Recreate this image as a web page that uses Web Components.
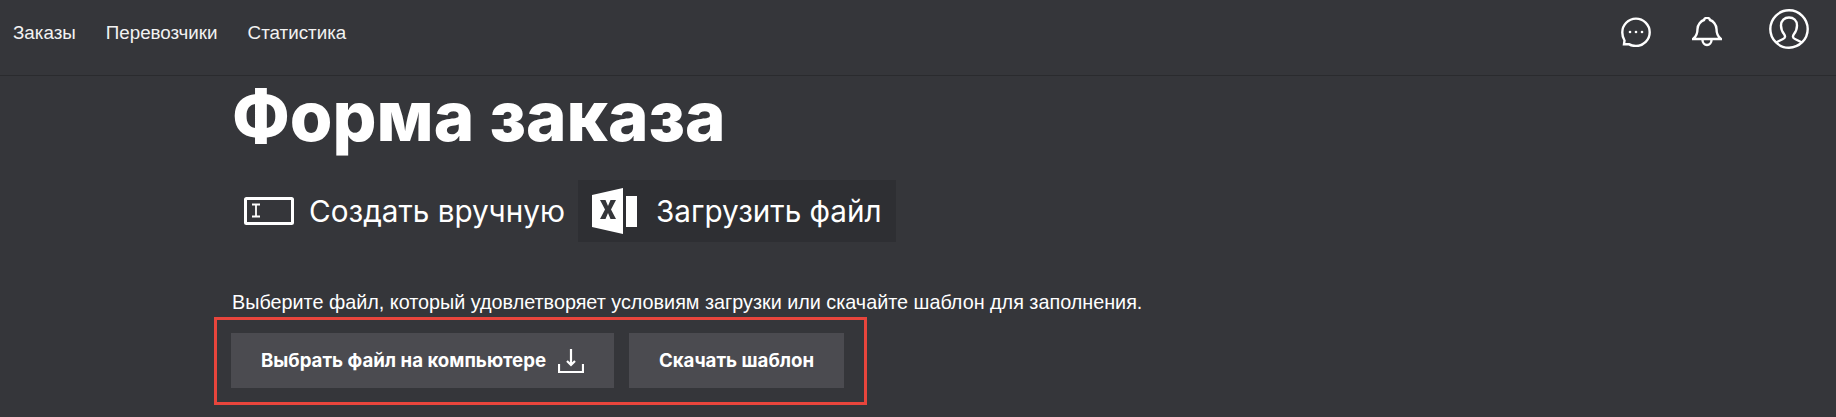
<!DOCTYPE html>
<html lang="ru">
<head>
<meta charset="utf-8">
<title>Форма заказа</title>
<style>
    html, body {
        margin: 0;
        height: 417px;
        overflow: hidden;
        background-color: #35363a;
        color: #fff;
        font-family: Inter, "Liberation Sans", sans-serif;
    }
</style>
</head>
<body>
<app-header></app-header>
<order-form></order-form>

<template id="appHeader">
<style>
    :host {
        display: flex;
        justify-content: space-between;
        height: 75px;
        border-bottom: 1px solid #2a2b2e;
    }
    nav {
        display: flex;
        gap: 30px;
        padding: 23px 0 0 13px;
        font-size: 18.8px;
        line-height: 20px;
        font-family: "Liberation Sans", sans-serif;
        color: #f2f2f2;
    }
    #icons {
        display: flex;
        align-items: flex-start;
    }
    svg {
        display: block;
        fill: none;
        stroke: #fff;
        stroke-width: 2.4;
    }
    #chat { margin: 17px 0 0 0; }
    #bell { margin: 17px 0 0 41px; }
    #user { margin: 9px 27px 0 47px; }
</style>
<nav>
    <span>Заказы</span>
    <span>Перевозчики</span>
    <span>Статистика</span>
</nav>
<div id="icons">
    <svg id="chat" width="30" height="30" viewBox="0 0 30 30">
        <path d="M3.500 23.500 C2 21 1.300 18.200 1.300 15.500 A13.700 13.700 0 1 1 15 29 C12.500 29 9.800 28.300 7.800 27.100 L3 27.300 Z" />
        <circle cx="9" cy="15" r="1.300" fill="#fff" stroke="none" />
        <circle cx="15" cy="15" r="1.300" fill="#fff" stroke="none" />
        <circle cx="21" cy="15" r="1.300" fill="#fff" stroke="none" />
    </svg>
    <svg id="bell" width="30" height="30" viewBox="0 0 30 30">
        <path d="M1 22 H29 C25.500 19.500 24.500 17 24.500 12 C24.500 7.500 21 4 18 3 C17.500 0.200 12.500 0.200 12 3 C9 4 5.500 7.500 5.500 12 C5.500 17 4.500 19.500 1 22 Z" />
        <path d="M10.500 23 A4.500 5 0 0 0 19.500 23" />
    </svg>
    <svg id="user" width="40" height="40" viewBox="0 0 40 40">
        <circle cx="20" cy="20" r="18.700" />
        <path d="M7 33.500 L14 30 C16.500 29 16.500 27 15 25 C13 22.500 12 19.500 12 16.500 C12 11.500 15.500 8.500 20 8.500 C24.500 8.500 28 11.500 28 16.500 C28 19.500 27 22.500 25 25 C23.500 27 23.500 29 26 30 L33 33.500" />
    </svg>
</div>
</template>

<template id="orderForm">
<style>
    :host {
        display: block;
        padding-left: 232px;
    }
    h1 {
        margin: 0;
        font-size: 69px;
        line-height: 80px;
        font-weight: 800;
        color: #fff;
    }
    #tabs {
        display: flex;
        margin: 24px 0 0 -2px;
    }
    p {
        margin: 50px 0 0 0;
        font-size: 19.8px;
        line-height: 20px;
        font-family: "Liberation Sans", sans-serif;
        color: #fff;
    }
    #actions {
        display: inline-flex;
        gap: 15px;
        margin: 5px 0 0 -18px;
        padding: 13px 20px 14px 14px;
        border: 3px solid #e8453c;
    }
</style>
<h1>Форма заказа</h1>
<div id="tabs">
    <form-tab>
        <svg slot="icon" width="50" height="28" viewBox="0 0 50 28" style="margin-right:15px">
            <rect x="1.500" y="1.500" width="47" height="25" rx="1" fill="none" stroke="#fff" stroke-width="3" />
            <path d="M8 7.500 H16 M12 7.500 V19.500 M8 19.500 H16" fill="none" stroke="#fff" stroke-width="1.800" />
        </svg>
        Создать вручную
    </form-tab>
    <form-tab active style="margin-left:-1px">
        <svg slot="icon" width="46" height="46" viewBox="0 0 46 46" style="margin-right:18px">
            <path d="M0 7 L31 0 V46 L0 39 Z" fill="#fff" />
            <rect x="34" y="8" width="11" height="31" fill="#fff" />
            <path d="M8 12 H13.500 L16 18 L18.500 12 H24 L19 21.500 L24 31 H18.500 L16 25 L13.500 31 H8 L13 21.500 Z" fill="#35363a" />
        </svg>
        Загрузить файл
    </form-tab>
</div>
<p>Выберите файл, который удовлетворяет условиям загрузки или скачайте шаблон для заполнения.</p>
<div id="actions">
    <action-button style="width:383px">
        Выбрать файл на компьютере
        <svg slot="icon" width="26" height="24" viewBox="0 0 26 24">
            <path d="M1 15 V23 H25 V15" fill="none" stroke="#fff" stroke-width="2.200" />
            <path d="M13 0 V16 M9 12 L13 16 L17 12" fill="none" stroke="#fff" stroke-width="2.200" />
        </svg>
    </action-button>
    <action-button style="width:215px">Скачать шаблон</action-button>
</div>
</template>

<template id="formTab">
<style>
    :host {
        display: flex;
        align-items: center;
        height: 62px;
        padding: 0 14px;
        font-size: 29.7px;
    }
    :host([active]) {
        background-color: #2e2f33;
    }
    ::slotted(svg) {
        display: block;
    }
</style>
<slot name="icon"></slot>
<span><slot></slot></span>
</template>

<template id="actionButton">
<style>
    :host {
        display: flex;
        align-items: center;
        justify-content: center;
        gap: 12px;
        height: 55px;
        background-color: #4b4b50;
        font-size: 18.67px;
        font-weight: 700;
        cursor: pointer;
    }
    ::slotted(svg) {
        display: block;
    }
</style>
<span><slot></slot></span>
<slot name="icon"></slot>
</template>

<script>
    function define (name, templateId) {
        customElements.define(name,
        class extends HTMLElement {
            constructor () {
                super ()

                this.attachShadow({ mode: 'open' })
                .appendChild(document.getElementById(templateId).content.cloneNode(true))
            }
        })
    }

    define('app-header', 'appHeader')
    define('form-tab', 'formTab')
    define('action-button', 'actionButton')
    define('order-form', 'orderForm')
</script>
</body>
</html>
